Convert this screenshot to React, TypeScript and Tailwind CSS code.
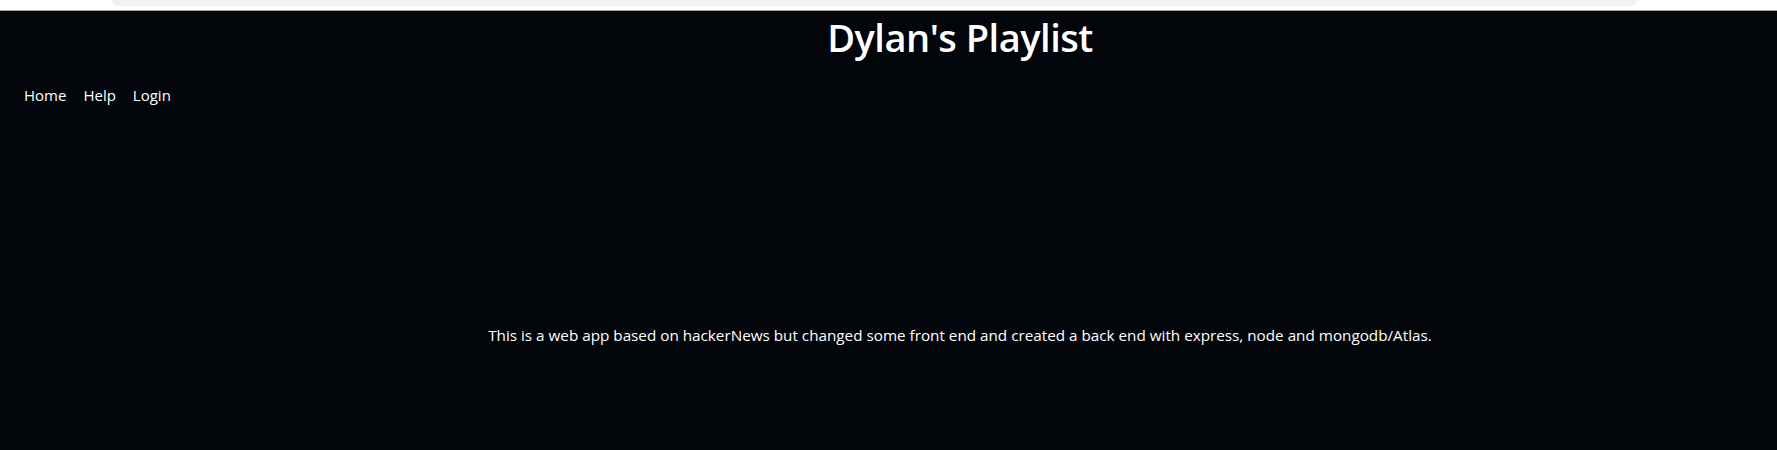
const navLinks = ['Home', 'Help', 'Login'];

const App = () => {
  return (
    <div className="w-full h-[450px] bg-[#02050a] text-white flex flex-col overflow-hidden" style={{ fontFamily: '"Open Sans", "Noto Sans", sans-serif' }}>
      {/* browser strip */}
      <div className="h-[10px] bg-white flex pl-[112px] pr-[140px]">
        <div className="flex-1 h-[6px] bg-[#f0f1f3] rounded-b-[8px]"></div>
      </div>
      <div className="h-px bg-[#a3a3a3]"></div>

      <header className="flex justify-center pl-[143px] pt-[2px]">
        <h1 className="text-[38px] leading-[48px] font-semibold tracking-[-0.5px]">Dylan's Playlist</h1>
      </header>

      <nav className="flex gap-[17px] pl-[24px] mt-[24px] text-[15px] leading-[20px]">
        {navLinks.map((link) => (
          <a key={link} href="#" className="text-white">
            {link}
          </a>
        ))}
      </nav>

      <main className="flex justify-center pl-[143px] mt-[220px]">
        <p className="text-[15.25px] leading-[20px]">
          This is a web app based on hackerNews but changed some front end and created a back end with express, node and mongodb/Atlas.
        </p>
      </main>
    </div>
  );
};

export default App;
